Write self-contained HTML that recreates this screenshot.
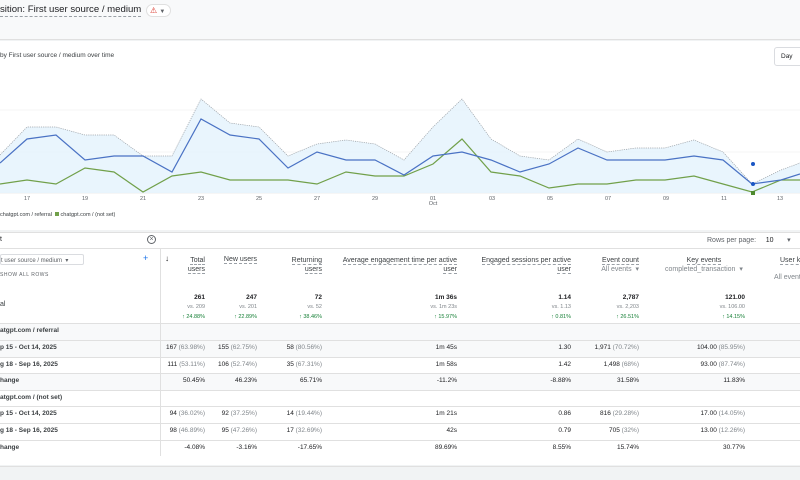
<!DOCTYPE html>
<html><head><meta charset="utf-8"><style>
*{margin:0;padding:0;box-sizing:border-box}
body{width:800px;height:480px;overflow:hidden;background:#f1f3f4;font-family:"Liberation Sans",Arial,sans-serif;color:#202124;position:relative}
.a{position:absolute;white-space:nowrap}
.r{text-align:right}
.s{font-size:7px}
.g{color:#80868b}
.gr{color:#188038}
.row{position:absolute;left:0;width:800px;border-top:1px solid #e0e0e0}
.dash{border-bottom:1px dashed #9aa0a6}
</style></head><body>
<div class="a" style="left:0;top:0;width:800px;height:40px;background:#f8f9fa;border-bottom:1px solid #e0e0e0"></div>
<div class="a" style="left:0;top:4px;font-size:9.6px;color:#202124;border-bottom:1px dashed #9aa0a6;line-height:12px">sition: First user source / medium</div>
<div class="a" style="left:146px;top:4px;width:25px;height:13px;border:1px solid #e0e0e0;border-radius:7px;background:#fff;font-size:8px;color:#d93025;padding-left:3px;line-height:11px">⚠ <span style="color:#5f6368;font-size:6px">▼</span></div>
<div class="a" style="left:0;top:41px;width:800px;height:189px;background:#fff"></div>
<div class="a s" style="left:0;top:52px;color:#3c4043;font-size:6.5px">by First user source / medium over time</div>
<div class="a" style="left:774px;top:47px;width:30px;height:19px;border:1px solid #dadce0;border-radius:3px;background:#fff;font-size:6.5px;padding:5px 0 0 6px">Day</div>
<svg class="a" style="left:0;top:60px" width="800" height="150" viewBox="0 60 800 150">
<line x1="0" x2="800" y1="110" y2="110" stroke="#eee" stroke-width=".6"/>
<line x1="0" x2="800" y1="152" y2="152" stroke="#eee" stroke-width=".6"/>
<line x1="0" x2="800" y1="193" y2="193" stroke="#ddd" stroke-width=".6"/>
<polygon fill="#e3f2fc" fill-opacity=".8" points="0,155 27,127 56,127 85,135 114,135 143,156 172,156 201,99 230,123 259,127 288,156 317,144 346,140 375,144 404,160 433,127 462,99 491,139 520,156 549,160 578,139 607,152 636,148 665,148 694,140 723,152 752,184 781,170 800,163 800,193 0,193"/>
<polyline fill="none" stroke="#9aa0a6" stroke-width=".7" stroke-dasharray="1.2 1" points="0,155 27,127 56,127 85,135 114,135 143,156 172,156 201,99 230,123 259,127 288,156 317,144 346,140 375,144 404,160 433,127 462,99 491,139 520,156 549,160 578,139 607,152 636,148 665,148 694,140 723,152 752,184 781,170 800,163"/>
<polyline fill="none" stroke="#71a04a" stroke-width="1.2" points="0,184 27,180 56,184 85,168 114,172 143,192 172,176 201,172 230,180 259,180 288,180 317,184 346,172 375,176 404,176 433,164 462,139 491,172 520,176 549,188 578,184 607,184 636,180 665,180 694,176 723,184 752,192 781,180 800,180"/>
<polyline fill="none" stroke="#4a72c4" stroke-width="1.2" points="0,163 27,139 56,135 85,160 114,156 143,156 172,172 201,119 230,135 259,139 288,168 317,152 346,160 375,160 404,175 433,156 462,152 491,160 520,172 549,164 578,148 607,160 636,160 665,160 694,156 723,160 752,184 781,180 800,174"/>
<circle cx="753" cy="164" r="2" fill="#1a56c4"/><circle cx="753" cy="184" r="2" fill="#1a56c4"/><rect x="751" y="191" width="4" height="4" fill="#4e8a2e"/>
<g font-size="5.5" fill="#5f6368" text-anchor="middle" font-family="Liberation Sans">
<text x="27" y="200">17</text><text x="85" y="200">19</text><text x="143" y="200">21</text><text x="201" y="200">23</text><text x="259" y="200">25</text><text x="317" y="200">27</text><text x="375" y="200">29</text><text x="433" y="200">01</text><text x="433" y="205">Oct</text><text x="492" y="200">03</text><text x="550" y="200">05</text><text x="608" y="200">07</text><text x="666" y="200">09</text><text x="724" y="200">11</text><text x="780" y="200">13</text>
</g></svg>
<div class="a" style="left:0;top:212px;font-size:5.5px;color:#3c4043">chatgpt.com / referral &nbsp;<span style="display:inline-block;width:4px;height:4px;background:#71a04a"></span> chatgpt.com / (not set)</div>
<div class="a" style="left:0;top:232px;width:800px;height:233px;background:#fff;border-top:1px solid #e0e0e0"></div>
<div class="a s" style="left:0;top:236px">t</div>
<div class="a" style="left:147px;top:235px;width:9px;height:9px;border:1px solid #5f6368;border-radius:50%;font-size:7px;line-height:7px;text-align:center;color:#5f6368">×</div>
<div class="a s g" style="left:707px;top:236px;color:#5f6368">Rows per page: &nbsp; &nbsp; <span style="color:#202124">10</span> &nbsp; &nbsp; &nbsp; ▾</div>
<div class="row" style="top:248px;height:0"></div>
<div class="a" style="left:0;top:254px;width:84px;height:11px;border:1px solid #dadce0;border-radius:2px;font-size:6px;color:#5f6368;padding:2px 0 0 0">t user source / medium &nbsp;▾</div>
<div class="a" style="left:143px;top:253px;color:#1a73e8;font-size:9px">+</div>
<div class="a" style="left:0;top:272px;font-size:5px;color:#5f6368;letter-spacing:.5px">SHOW ALL ROWS</div>
<div class="a s" style="left:0;top:301px;color:#3c4043">al</div>
<div class="a" style="left:165px;top:254px;font-size:8px">↓</div>
<div class="a s r" style="right:595px;top:256px;color:#3c4043;line-height:9px"><span class="dash">Total</span><br><span class="dash">users</span></div>
<div class="a s r" style="right:543px;top:256px;color:#3c4043"><span class="dash">New users</span></div>
<div class="a s r" style="right:478px;top:256px;color:#3c4043;line-height:9px"><span class="dash">Returning</span><br><span class="dash">users</span></div>
<div class="a s r" style="right:343px;top:256px;color:#3c4043;line-height:9px"><span class="dash">Average engagement time per active</span><br><span class="dash">user</span></div>
<div class="a s r" style="right:229px;top:256px;color:#3c4043;line-height:9px"><span class="dash">Engaged sessions per active</span><br><span class="dash">user</span></div>
<div class="a s r" style="right:161px;top:256px;color:#3c4043;line-height:9px"><span class="dash">Event count</span><br><span class="g">All events &nbsp;▾</span></div>
<div class="a s" style="left:665px;top:256px;color:#3c4043;line-height:9px;text-align:center"><span class="dash">Key events</span><br><span class="g">completed_transaction &nbsp;▾</span></div>
<div class="a s" style="left:780px;top:256px;color:#3c4043;line-height:9px"><span class="dash">User ke</span><br></div>
<div class="a s g" style="left:774px;top:274px">All event</div>
<div class="a s r" style="right:595px;top:293px;line-height:9px;font-size:6.5px"><b>261</b><br><span class="g" style="font-size:5.5px">vs. 209</span><br><span class="gr" style="font-size:5.5px">↑ 24.88%</span></div>
<div class="a s r" style="right:543px;top:293px;line-height:9px;font-size:6.5px"><b>247</b><br><span class="g" style="font-size:5.5px">vs. 201</span><br><span class="gr" style="font-size:5.5px">↑ 22.89%</span></div>
<div class="a s r" style="right:478px;top:293px;line-height:9px;font-size:6.5px"><b>72</b><br><span class="g" style="font-size:5.5px">vs. 52</span><br><span class="gr" style="font-size:5.5px">↑ 38.46%</span></div>
<div class="a s r" style="right:343px;top:293px;line-height:9px;font-size:6.5px"><b>1m 36s</b><br><span class="g" style="font-size:5.5px">vs. 1m 23s</span><br><span class="gr" style="font-size:5.5px">↑ 15.97%</span></div>
<div class="a s r" style="right:229px;top:293px;line-height:9px;font-size:6.5px"><b>1.14</b><br><span class="g" style="font-size:5.5px">vs. 1.13</span><br><span class="gr" style="font-size:5.5px">↑ 0.81%</span></div>
<div class="a s r" style="right:161px;top:293px;line-height:9px;font-size:6.5px"><b>2,787</b><br><span class="g" style="font-size:5.5px">vs. 2,203</span><br><span class="gr" style="font-size:5.5px">↑ 26.51%</span></div>
<div class="a s r" style="right:55px;top:293px;line-height:9px;font-size:6.5px"><b>121.00</b><br><span class="g" style="font-size:5.5px">vs. 106.00</span><br><span class="gr" style="font-size:5.5px">↑ 14.15%</span></div>
<div class="row" style="top:323px;height:17px;background:#f8f9fa"></div>
<div class="row" style="top:340px;height:17px;background:#f8f9fa"></div>
<div class="row" style="top:357px;height:16px;background:#fff"></div>
<div class="row" style="top:373px;height:17px;background:#f8f9fa"></div>
<div class="row" style="top:390px;height:16px;background:#fff"></div>
<div class="row" style="top:406px;height:17px;background:#fff"></div>
<div class="row" style="top:423px;height:17px;background:#fff"></div>
<div class="row" style="top:440px;height:17px;background:#fff"></div>
<div class="a" style="left:160px;top:249px;width:1px;height:207px;background:#e0e0e0"></div>
<div style="font-size:6.5px;font-weight:bold;color:#3c4043">
<div class="a" style="left:0;top:327px">atgpt.com / referral</div>
<div class="a" style="left:0;top:344px">p 15 - Oct 14, 2025</div>
<div class="a" style="left:0;top:361px">g 18 - Sep 16, 2025</div>
<div class="a" style="left:0;top:377px">hange</div>
<div class="a" style="left:0;top:394px">atgpt.com / (not set)</div>
<div class="a" style="left:0;top:410px">p 15 - Oct 14, 2025</div>
<div class="a" style="left:0;top:427px">g 18 - Sep 16, 2025</div>
<div class="a" style="left:0;top:444px">hange</div>
</div>
<div style="font-size:6.5px">
<div class="a r" style="right:595px;top:344px">167 <span class="g">(63.98%)</span></div>
<div class="a r" style="right:543px;top:344px">155 <span class="g">(62.75%)</span></div>
<div class="a r" style="right:478px;top:344px">58 <span class="g">(80.56%)</span></div>
<div class="a r" style="right:343px;top:344px">1m 45s</div>
<div class="a r" style="right:229px;top:344px">1.30</div>
<div class="a r" style="right:161px;top:344px">1,971 <span class="g">(70.72%)</span></div>
<div class="a r" style="right:55px;top:344px">104.00 <span class="g">(85.95%)</span></div>
<div class="a r" style="right:595px;top:361px">111 <span class="g">(53.11%)</span></div>
<div class="a r" style="right:543px;top:361px">106 <span class="g">(52.74%)</span></div>
<div class="a r" style="right:478px;top:361px">35 <span class="g">(67.31%)</span></div>
<div class="a r" style="right:343px;top:361px">1m 58s</div>
<div class="a r" style="right:229px;top:361px">1.42</div>
<div class="a r" style="right:161px;top:361px">1,498 <span class="g">(68%)</span></div>
<div class="a r" style="right:55px;top:361px">93.00 <span class="g">(87.74%)</span></div>
<div class="a r" style="right:595px;top:377px">50.45%</div>
<div class="a r" style="right:543px;top:377px">46.23%</div>
<div class="a r" style="right:478px;top:377px">65.71%</div>
<div class="a r" style="right:343px;top:377px">-11.2%</div>
<div class="a r" style="right:229px;top:377px">-8.88%</div>
<div class="a r" style="right:161px;top:377px">31.58%</div>
<div class="a r" style="right:55px;top:377px">11.83%</div>
<div class="a r" style="right:595px;top:410px">94 <span class="g">(36.02%)</span></div>
<div class="a r" style="right:543px;top:410px">92 <span class="g">(37.25%)</span></div>
<div class="a r" style="right:478px;top:410px">14 <span class="g">(19.44%)</span></div>
<div class="a r" style="right:343px;top:410px">1m 21s</div>
<div class="a r" style="right:229px;top:410px">0.86</div>
<div class="a r" style="right:161px;top:410px">816 <span class="g">(29.28%)</span></div>
<div class="a r" style="right:55px;top:410px">17.00 <span class="g">(14.05%)</span></div>
<div class="a r" style="right:595px;top:427px">98 <span class="g">(46.89%)</span></div>
<div class="a r" style="right:543px;top:427px">95 <span class="g">(47.26%)</span></div>
<div class="a r" style="right:478px;top:427px">17 <span class="g">(32.69%)</span></div>
<div class="a r" style="right:343px;top:427px">42s</div>
<div class="a r" style="right:229px;top:427px">0.79</div>
<div class="a r" style="right:161px;top:427px">705 <span class="g">(32%)</span></div>
<div class="a r" style="right:55px;top:427px">13.00 <span class="g">(12.26%)</span></div>
<div class="a r" style="right:595px;top:444px">-4.08%</div>
<div class="a r" style="right:543px;top:444px">-3.16%</div>
<div class="a r" style="right:478px;top:444px">-17.65%</div>
<div class="a r" style="right:343px;top:444px">89.69%</div>
<div class="a r" style="right:229px;top:444px">8.55%</div>
<div class="a r" style="right:161px;top:444px">15.74%</div>
<div class="a r" style="right:55px;top:444px">30.77%</div>
</div>
<div class="a" style="left:0;top:466px;width:800px;height:14px;background:#f1f3f4;border-top:1px solid #e0e0e0"></div>
</body></html>
